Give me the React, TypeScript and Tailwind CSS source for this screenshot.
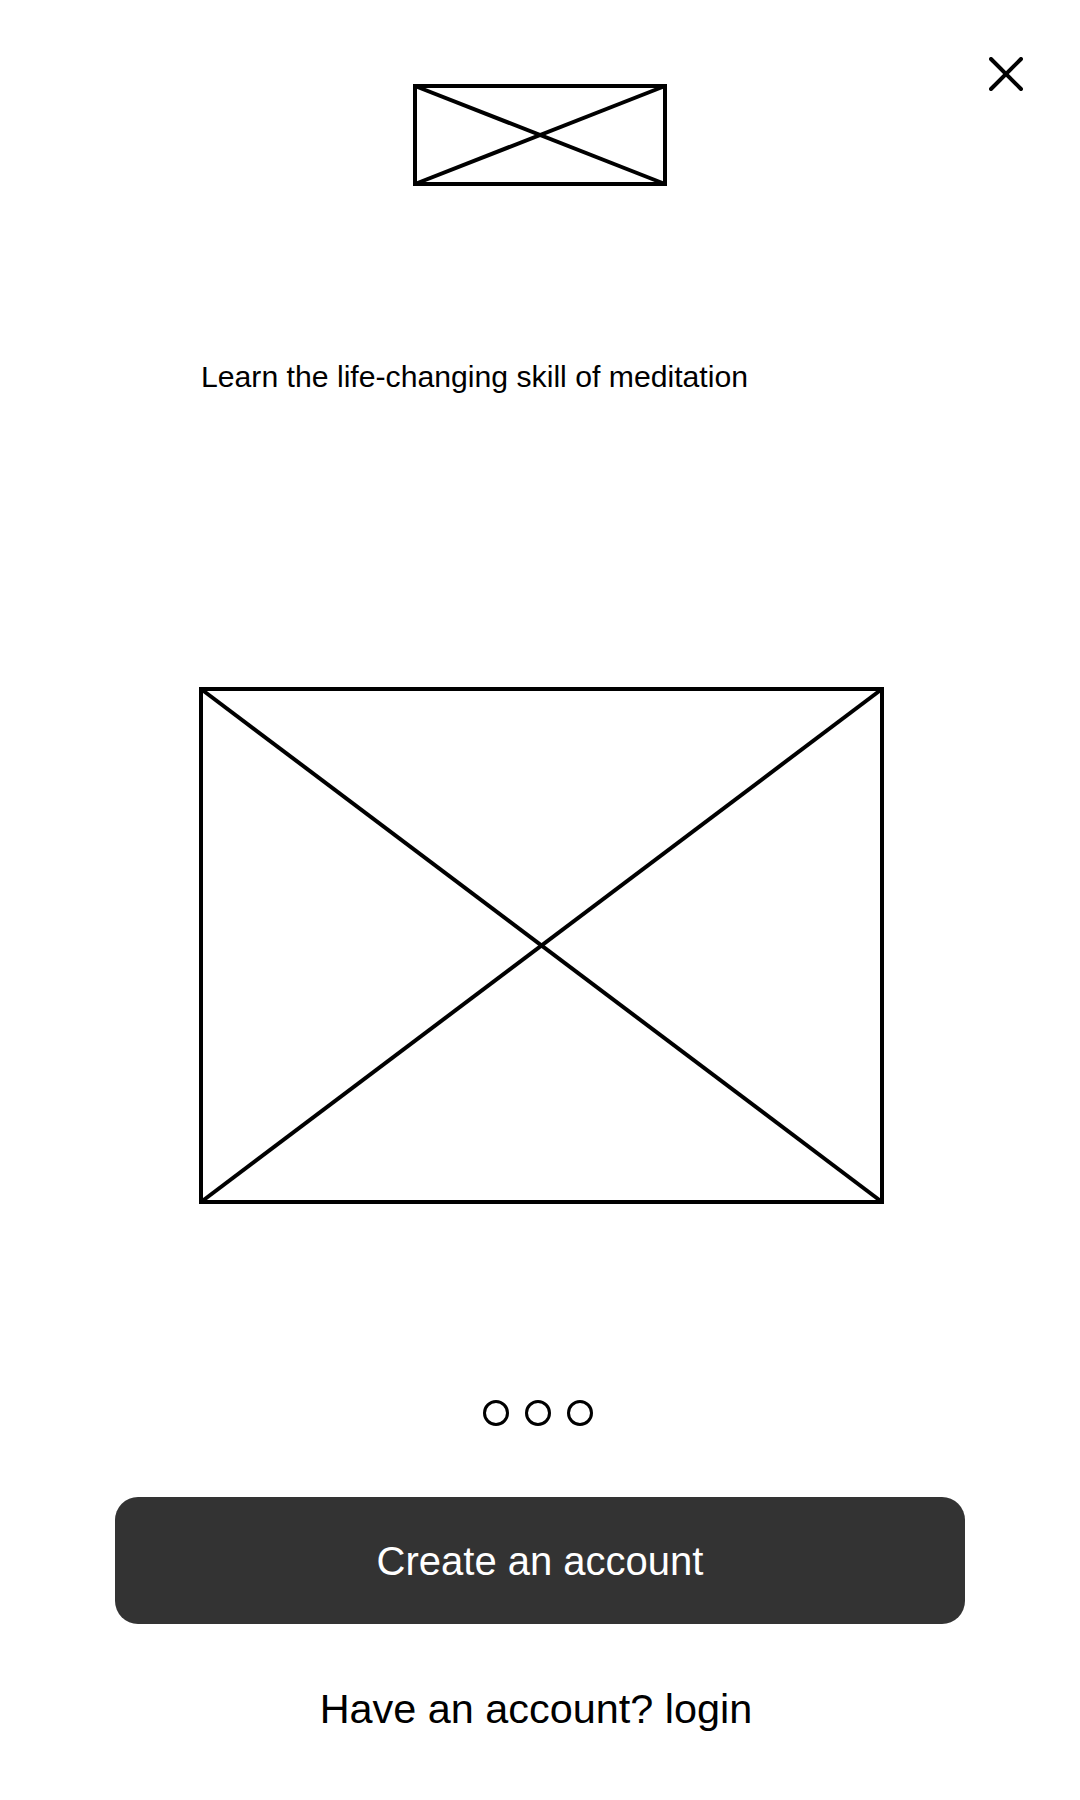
import React from "react";

function Placeholder({ w, h, sw = 4 }: { w: number; h: number; sw?: number }) {
  const o = sw / 2;
  return (
    <svg width={w} height={h} viewBox={`0 0 ${w} ${h}`} className="block">
      <rect x={o} y={o} width={w - sw} height={h - sw} fill="none" stroke="#000" strokeWidth={sw} />
      <line x1={o} y1={o} x2={w - o} y2={h - o} stroke="#000" strokeWidth={sw} />
      <line x1={o} y1={h - o} x2={w - o} y2={o} stroke="#000" strokeWidth={sw} />
    </svg>
  );
}

export default function App() {
  return (
    <div
      className="relative w-[1080px] h-[1800px] bg-white text-black flex flex-col"
      style={{ fontFamily: '"Liberation Sans", Arial, sans-serif' }}
    >
      <button className="absolute top-[57px] right-[57px] w-[34px] h-[34px]" aria-label="Close">
        <svg width="34" height="34" viewBox="0 0 34 34" className="block">
          <line x1="2" y1="2" x2="32" y2="32" stroke="#000" strokeWidth="4" strokeLinecap="round" />
          <line x1="32" y1="2" x2="2" y2="32" stroke="#000" strokeWidth="4" strokeLinecap="round" />
        </svg>
      </button>

      <div className="mt-[84px] flex justify-center">
        <Placeholder w={254} h={102} />
      </div>

      <p className="mt-[173px] pl-[201px] text-[30.2px] leading-[36px]">
        Learn the life-changing skill of meditation
      </p>

      <div className="mt-[292px] ml-[199px]">
        <Placeholder w={685} h={517} />
      </div>

      <div className="mt-[196px] flex justify-center gap-[16px] pr-[4px]">
        <div className="w-[26px] h-[26px] rounded-full border-[3px] border-black" />
        <div className="w-[26px] h-[26px] rounded-full border-[3px] border-black" />
        <div className="w-[26px] h-[26px] rounded-full border-[3px] border-black" />
      </div>

      <button className="mt-[71px] mx-auto w-[850px] h-[127px] rounded-[23px] bg-[#333333] text-white text-[40px] leading-[46px] flex items-center justify-center">
        Create an account
      </button>

      <p className="mt-[61px] text-center text-[41.4px] leading-[48px] pr-[8px]">
        Have an account? login
      </p>
    </div>
  );
}
